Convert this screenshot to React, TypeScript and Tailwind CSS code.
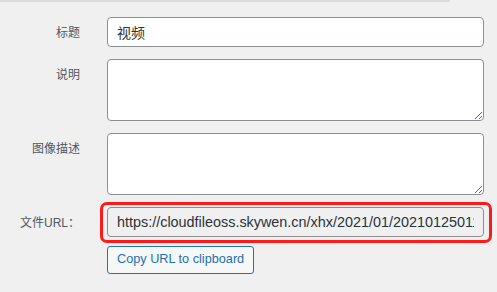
import React from "react";

const cjk = '"Liberation Sans", "Noto Sans CJK SC", sans-serif';

function Row({ label, children }: { label: string; children: React.ReactNode }) {
  return (
    <div className="flex items-start">
      <div
        className="w-[80px] shrink-0 pt-[8px] text-right text-[12px] leading-[16px] text-[#50575e]"
        style={{ fontFamily: cjk }}
      >
        {label}
      </div>
      <div className="ml-[27px] w-[377px] shrink-0">{children}</div>
    </div>
  );
}

export default function App() {
  return (
    <div className="relative h-[292px] w-[497px] overflow-hidden bg-[#f0f0f1]" style={{ fontFamily: cjk }}>
      <div className="h-[2px] w-[450px] bg-[#dcdcde]" />
      <div className="flex flex-col gap-[12px] pt-[15px]">
        <Row label="标题">
          <input
            readOnly
            value="视频"
            className="block h-[30px] w-full rounded-[4px] border border-[#8c8f94] bg-white px-[9px] text-[14px] text-[#2c3338] outline-none"
            style={{ fontFamily: cjk }}
          />
        </Row>
        <Row label="说明">
          <textarea className="block h-[62px] w-full rounded-[4px] border border-[#8c8f94] bg-white outline-none" />
        </Row>
        <Row label="图像描述">
          <textarea className="block h-[62px] w-full rounded-[4px] border border-[#8c8f94] bg-white outline-none" />
        </Row>
        <div className="flex flex-col gap-[9px]">
          <Row label="文件URL：">
            <div className="relative">
              <input
                readOnly
                value="https://cloudfileoss.skywen.cn/xhx/2021/01/2021012501155.mp4"
                className="block h-[30px] w-full rounded-[4px] border border-[#8c8f94] bg-[#f0f0f1] px-[9px] text-[14.4px] text-[#2c3338] outline-none"
                style={{ fontFamily: cjk }}
              />
              <div className="pointer-events-none absolute left-[-7px] top-[-5px] h-[41px] w-[392px] rounded-[7px] border-[3px] border-[#ff1a1a]" />
            </div>
          </Row>
          <Row label="">
            <button
              className="block h-[28px] rounded-[3px] border border-[#2271b1] bg-[#f6f7f7] px-[9px] text-[12.7px] text-[#2271b1]"
              style={{ fontFamily: cjk }}
            >
              Copy URL to clipboard
            </button>
          </Row>
        </div>
      </div>
    </div>
  );
}
